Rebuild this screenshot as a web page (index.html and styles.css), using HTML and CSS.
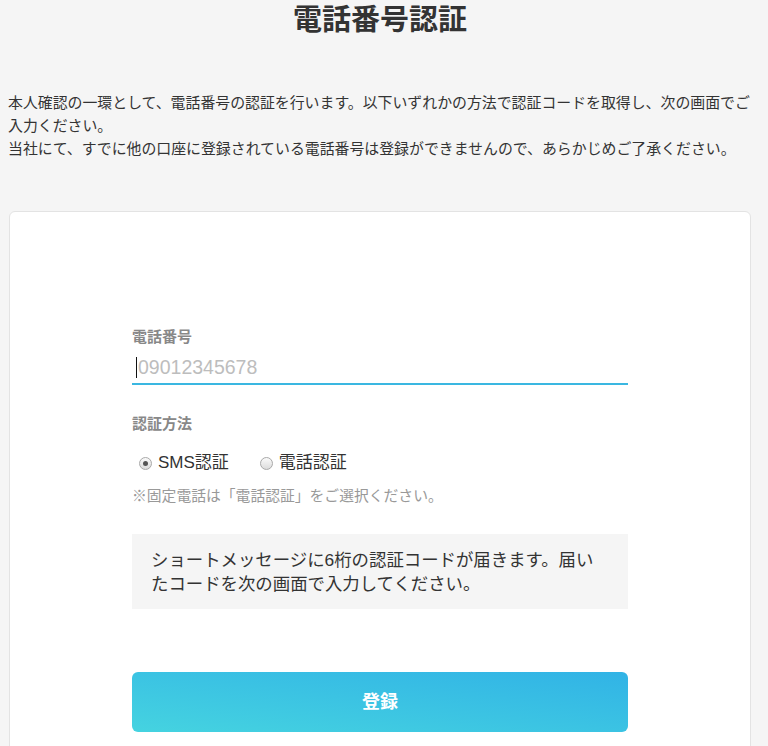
FILE: index.html
```html
<!DOCTYPE html>
<html lang="ja">
<head>
<meta charset="utf-8">
<title>電話番号認証</title>
<link rel="stylesheet" href="styles.css">
</head>
<body>
<div class="page">
  <h1 class="title">電話番号認証</h1>
  <p class="desc">本人確認の一環として、電話番号の認証を行います。以下いずれかの方法で認証コードを取得し、次の画面でご入力ください。<br>当社にて、すでに他の口座に登録されている電話番号は登録ができませんので、あらかじめご了承ください。</p>
  <div class="card">
    <form class="form">
      <label class="label" for="tel">電話番号</label>
      <div class="field">
        <input id="tel" class="input" type="tel" placeholder="09012345678" autofocus>
        <span class="caret"></span>
      </div>
      <div class="label label-method">認証方法</div>
      <div class="radios">
        <label class="radio"><input type="radio" name="m" checked><span class="dot"></span>SMS認証</label>
        <label class="radio"><input type="radio" name="m"><span class="dot"></span>電話認証</label>
      </div>
      <p class="note">※固定電話は「電話認証」をご選択ください。</p>
      <div class="info">ショートメッセージに6桁の認証コードが届きます。届いたコードを次の画面で入力してください。</div>
      <button type="button" class="submit">登録</button>
    </form>
  </div>
</div>
</body>
</html>
```

FILE: styles.css
```css
* { box-sizing: border-box; }
html, body { margin: 0; padding: 0; background: #f5f5f5; }
body {
  font-family: "Liberation Sans", "Noto Sans CJK JP", sans-serif;
  color: #333;
  overflow: hidden;
}
.page {
  width: 744px;
  margin-left: 8px;
}
.title {
  margin: 0;
  height: 40px;
  line-height: 40px;
  font-size: 29px;
  font-weight: bold;
  text-align: center;
  color: #333;
}
.desc {
  margin: 52px 0 0;
  font-size: 14.9px;
  line-height: 23px;
  color: #333;
}
.card {
  margin: 50px 1px 0;
  background: #fff;
  border: 1px solid #e3e3e3;
  border-radius: 6px;
  padding: 114px 0 60px;
}
.form {
  width: 496px;
  margin: 0 auto;
  display: flex;
  flex-direction: column;
}
.label {
  display: block;
  font-size: 15px;
  font-weight: bold;
  line-height: 22px;
  color: #888;
}
.field { position: relative; }
.input {
  width: 100%;
  height: 37px;
  padding: 3px 0 0 6px;
  border: 0;
  border-bottom: 2px solid #3ab7e1;
  outline: none;
  background: transparent;
  font-family: "Liberation Sans", sans-serif;
  font-size: 19.5px;
  color: #333;
  caret-color: #000;
}
.input::placeholder { color: #bdbdbd; }
.caret {
  position: absolute;
  left: 4px;
  top: 9px;
  width: 1px;
  height: 21px;
  background: #111;
}
.label-method { margin-top: 28px; }
.radios {
  margin-top: 16px;
  display: flex;
  gap: 31px;
  padding-left: 7px;
  font-size: 17px;
  line-height: 24px;
  color: #333;
}
.radio {
  display: flex;
  align-items: center;
  cursor: pointer;
}
.radio input { display: none; }
.dot {
  width: 13px;
  height: 13px;
  border-radius: 50%;
  border: 1px solid #a9a9a9;
  background: linear-gradient(#fafafa, #dcdcdc);
  margin-right: 6px;
  position: relative;
}
.radio input:checked + .dot::after {
  content: "";
  position: absolute;
  left: 3px;
  top: 3px;
  width: 5px;
  height: 5px;
  border-radius: 50%;
  background: #555;
}
.note {
  margin: 11px 0 0;
  font-size: 14.8px;
  line-height: 20px;
  color: #999;
}
.info {
  margin-top: 28px;
  background: #f5f5f5;
  padding: 14px 20px 13px 19px;
  font-size: 17.4px;
  line-height: 24px;
  color: #333;
}
.submit {
  margin-top: 63px;
  height: 60px;
  padding: 0 0 4px;
  border: 0;
  border-radius: 6px;
  background: linear-gradient(to top right, #45d3e0, #31b3e6);
  color: #fff;
  font-family: "Noto Sans CJK JP", sans-serif;
  font-size: 18px;
  font-weight: bold;
  cursor: pointer;
}
```
